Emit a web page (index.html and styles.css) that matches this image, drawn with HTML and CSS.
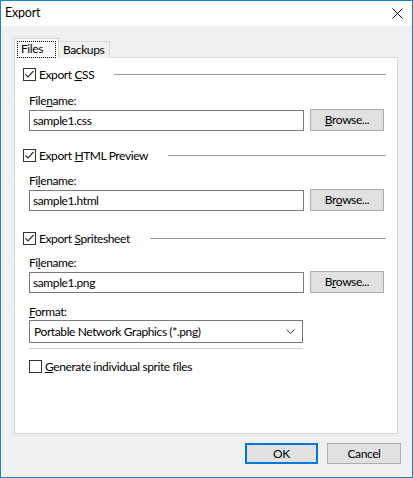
FILE: index.html
```html
<!DOCTYPE html>
<html>
<head>
<meta charset="utf-8">
<link rel="stylesheet" href="styles.css">
</head>
<body>
<div class="window">
  <div class="titlebar">
    <span class="title">Export</span>
    <svg class="close" width="11" height="11" viewBox="0 0 11 11"><path d="M0.5 0.5 L10.5 10.5 M10.5 0.5 L0.5 10.5" stroke="#000" stroke-width="1" fill="none"/></svg>
  </div>
  <div class="content">
    <div class="tabs">
      <div class="tab active"><span class="focus">Files</span></div>
      <div class="tab">Backups</div>
    </div>
    <div class="panel">
      <div class="check-row first">
        <span class="checkbox"><svg width="11" height="11" viewBox="0 0 11 11"><path d="M1.5 5.5 L4 8 L9.5 2" stroke="#333" stroke-width="1.2" fill="none"/></svg></span>
        <span class="check-label">Export <u>C</u>SS</span>
        <span class="rule"></span>
      </div>
      <div class="field-label l1">File<u>n</u>ame:</div>
      <div class="field-row">
        <div class="input">sample1.css</div>
        <div class="button"><u>B</u>rowse...</div>
      </div>

      <div class="check-row second">
        <span class="checkbox"><svg width="11" height="11" viewBox="0 0 11 11"><path d="M1.5 5.5 L4 8 L9.5 2" stroke="#333" stroke-width="1.2" fill="none"/></svg></span>
        <span class="check-label">Export <u>H</u>TML Preview</span>
        <span class="rule"></span>
      </div>
      <div class="field-label l2">Fi<u>l</u>ename:</div>
      <div class="field-row">
        <div class="input">sample1.html</div>
        <div class="button">Br<u>o</u>wse...</div>
      </div>

      <div class="check-row third">
        <span class="checkbox"><svg width="11" height="11" viewBox="0 0 11 11"><path d="M1.5 5.5 L4 8 L9.5 2" stroke="#333" stroke-width="1.2" fill="none"/></svg></span>
        <span class="check-label">Export <u>S</u>pritesheet</span>
        <span class="rule"></span>
      </div>
      <div class="field-label l3">Fi<u>l</u>ename:</div>
      <div class="field-row">
        <div class="input">sample1.png</div>
        <div class="button">B<u>r</u>owse...</div>
      </div>

      <div class="field-label l4"><u>F</u>ormat:</div>
      <div class="select">
        <span>Portable Network Graphics (*.png)</span>
        <svg width="9" height="6" viewBox="0 0 9 6"><path d="M0.5 0.5 L4.5 4.5 L8.5 0.5" stroke="#444" stroke-width="1" fill="none"/></svg>
      </div>
      <div class="select-shadow"></div>

      <div class="check-row fourth">
        <span class="checkbox"></span>
        <span class="check-label"><u>G</u>enerate individual sprite files</span>
      </div>
    </div>
    <div class="footer">
      <div class="button ok">OK</div>
      <div class="button cancel">Cancel</div>
    </div>
  </div>
</div>
</body>
</html>
```

FILE: styles.css
```css
* { box-sizing: border-box; }
html, body { margin: 0; padding: 0; }
body {
  font-family: Lato, "Noto Sans", sans-serif;
  font-size: 12px;
  letter-spacing: -0.4px;
  color: #000;
  background: #fff;
}
u { text-decoration: underline; text-underline-offset: 1px; }
.window {
  width: 413px;
  height: 478px;
  border: 1px solid #1883d7;
  background: #f0f0f0;
  display: flex;
  flex-direction: column;
}
.titlebar {
  height: 25px;
  background: #fff;
  display: flex;
  align-items: center;
  justify-content: space-between;
  padding: 0 9px 0 4px;
}
.title { font-size: 12.5px; line-height: 16px; margin-top: -1px; letter-spacing: -0.2px; }
.close { margin-top: -1px; }
.content {
  padding: 12px 14px 0 13px;
  display: flex;
  flex-direction: column;
}
.tabs {
  display: flex;
  align-items: flex-end;
  height: 20px;
  margin-bottom: -1px;
  position: relative;
  z-index: 1;
}
.tab {
  border: 1px solid #d9d9d9;
  border-bottom: none;
  background: #f0f0f0;
  height: 17px;
  line-height: 15px;
  padding: 0 5px 0 4px;
  margin-left: -1px;
}
.tab.active {
  background: #fff;
  height: 20px;
  width: 45px;
  margin-left: 0;
  padding: 2px 2px 0 2px;
  z-index: 2;
}
.focus {
  display: block;
  border: 1px dotted #000;
  height: 17px;
  line-height: 14px;
  padding-left: 3px;
}
.panel {
  background: #fff;
  border: 1px solid #d9d9d9;
  height: 377px;
  padding: 0 13px 0 8px;
  display: flex;
  flex-direction: column;
}
.check-row {
  display: flex;
  align-items: center;
  height: 13px;
}
.check-row.first { margin-top: 10px; }
.check-row.second { margin-top: 18px; }
.check-row.third { margin-top: 21px; }
.check-row.fourth { margin-top: 11px; margin-left: 6px; }
.checkbox {
  width: 13px;
  height: 13px;
  border: 1px solid #333;
  background: #fff;
  display: flex;
  align-items: center;
  justify-content: center;
  flex: none;
}
.check-label {
  margin-left: 3px;
  line-height: 16px;
  white-space: nowrap;
}
.rule {
  flex: 1;
  height: 1px;
  background: #a0a0a0;
  margin-left: 20px;
  margin-right: -2px;
}
.field-label {
  margin-left: 6px;
  height: 16px;
  line-height: 16px;
}
.l1 { margin-top: 12px; }
.l2 { margin-top: 11px; }
.l3 { margin-top: 10px; }
.l4 { margin-top: 11px; }
.field-row {
  display: flex;
  align-items: flex-end;
  height: 22px;
  margin-left: 6px;
  gap: 6px;
}
.input {
  width: 275px;
  height: 21px;
  border: 1px solid #7a7a7a;
  background: #fff;
  line-height: 19px;
  padding-left: 3px;
}
.button {
  width: 74px;
  height: 22px;
  border: 1px solid #adadad;
  background: #e1e1e1;
  text-align: center;
  line-height: 20px;
}
.select {
  margin-left: 6px;
  width: 274px;
  height: 23px;
  border: 1px solid #7a7a7a;
  background: #fff;
  display: flex;
  align-items: center;
  justify-content: space-between;
  padding: 0 7px 0 4px;
}
.select-shadow {
  margin-left: 6px;
  margin-top: 5px;
  width: 274px;
  height: 1px;
  background: #cfcfcf;
}
.footer {
  display: flex;
  justify-content: flex-end;
  gap: 9px;
  margin-top: 9px;
  margin-right: -3px;
}
.button.ok {
  width: 73px;
  height: 21px;
  border: 2px solid #0078d7;
  line-height: 17px;
}
.button.cancel {
  width: 74px;
  height: 21px;
  line-height: 19px;
}
```
